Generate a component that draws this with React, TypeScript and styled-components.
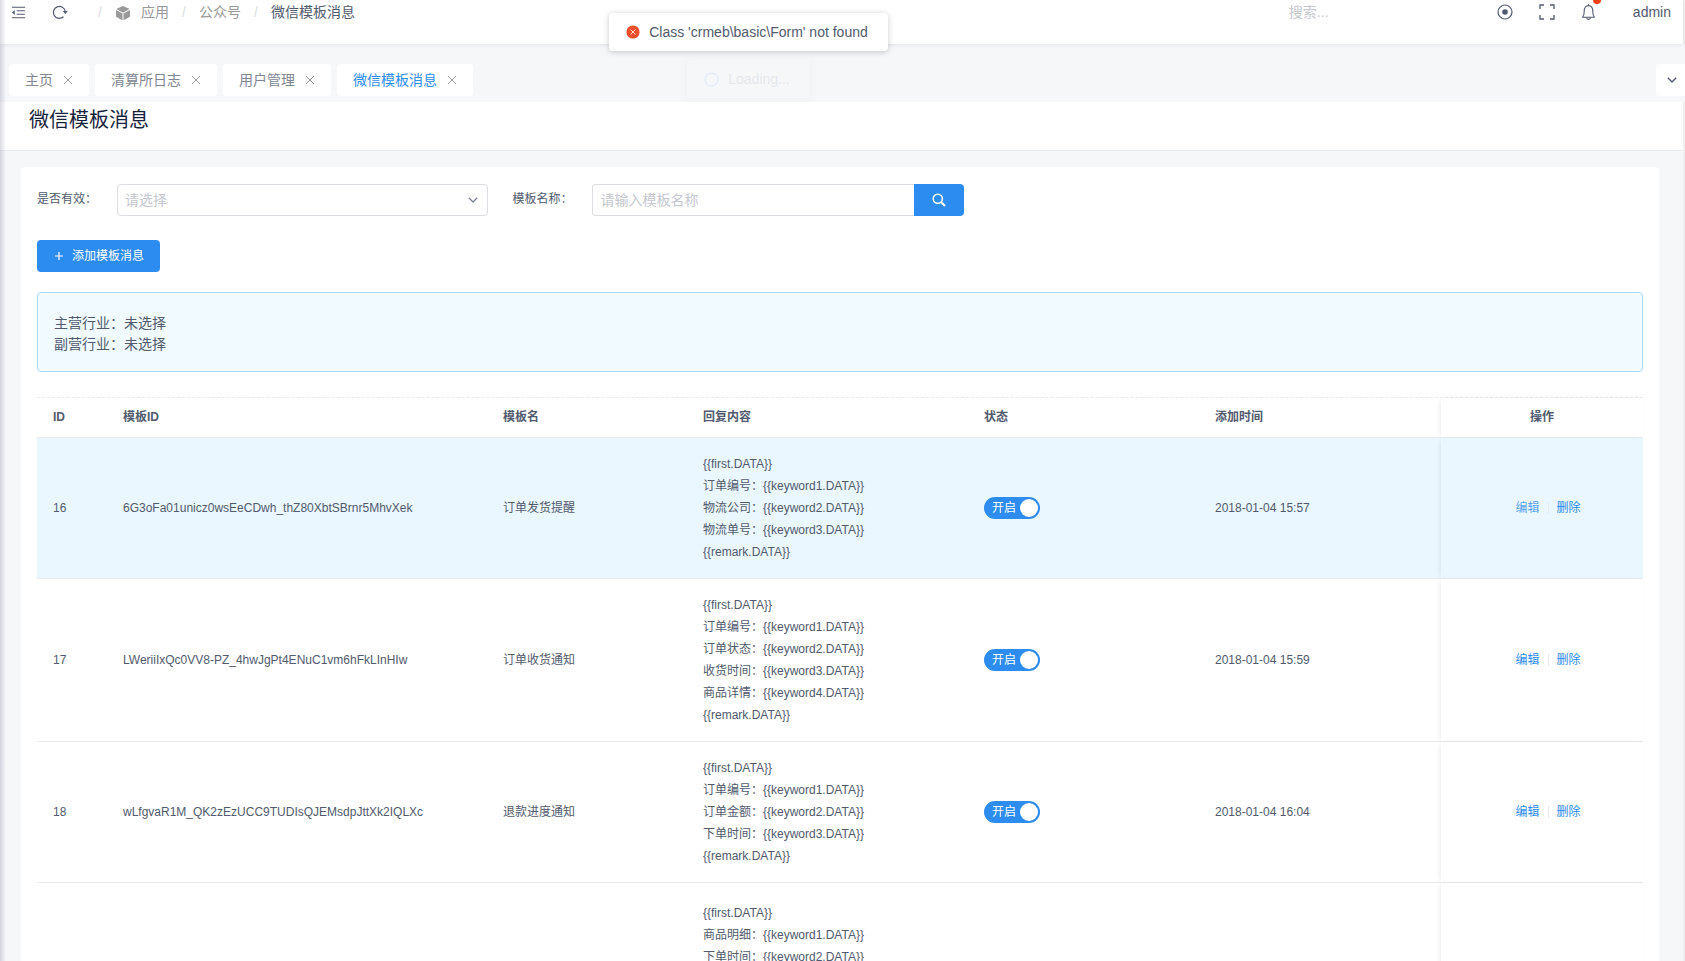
import React from "react";
import styled, { createGlobalStyle } from "styled-components";
import { AiOutlineMenuFold } from "react-icons/ai";
import { IoMdCube } from "react-icons/io";

const GlobalStyle = createGlobalStyle`
  *, *::before, *::after { box-sizing: border-box; }
  body {
    margin: 0;
    background: #f5f7f9;
    color: #515a6e;
    font: 14px/21px "Liberation Sans", "Noto Sans CJK SC", sans-serif;
  }
  button, input, select { font: inherit; color: inherit; margin: 0; }
  button { cursor: pointer; }
  svg { display: block; flex: none; }
`;

const Shell = styled.div`
  position: relative;
  height: 100vh;
  overflow: hidden;
  padding-right: 2px;
  background: linear-gradient(to left, #f0f0f0 2px, #f5f7f9 2px);
  &::before {
    content: "";
    position: absolute;
    z-index: 5;
    inset: 0 auto 0 0;
    width: 6px;
    background: linear-gradient(to right, rgba(100, 100, 140, 0.24), rgba(100, 100, 140, 0));
  }
`;

/* ---------- header ---------- */

const Header = styled.header`
  position: relative;
  display: flex;
  align-items: center;
  height: 44px;
  padding: 0 12px 20px 10px;
  background: #fff;
  box-shadow: 0 1px 4px rgba(0, 21, 41, 0.08);
`;

const IconButton = styled.button`
  position: relative;
  display: flex;
  padding: 0;
  border: 0;
  background: none;
  color: #515a6e;
`;

const HeaderTools = styled.div`
  display: flex;
  align-items: center;
  gap: 25px;
`;

const Breadcrumb = styled.nav`
  display: flex;
  align-items: center;
  margin-left: 17px;
  padding-top: 1px;
`;

const Separator = styled.span`
  width: 30px;
  text-align: center;
  color: #dcdee2;
`;

const Crumb = styled.a`
  display: flex;
  align-items: center;
  gap: 10px;
  color: #999;
  text-decoration: none;
`;

const CurrentCrumb = styled.span`
  color: #515a6e;
`;

const HeaderSearch = styled.input`
  width: 160px;
  height: 24px;
  margin: 0 48px 0 auto;
  padding: 0;
  border: 0;
  background: none;
  outline: none;
  &::placeholder { color: #c5c8ce; opacity: 1; }
`;

const HeaderActions = styled.div`
  display: flex;
  align-items: center;
  gap: 26px;
  margin-right: 37px;
`;

const Dot = styled.i`
  position: absolute;
  top: -8px;
  right: -5px;
  width: 8px;
  height: 8px;
  border-radius: 50%;
  background: #ed4014;
`;

/* ---------- page tabs ---------- */

const TabBar = styled.div`
  display: flex;
  gap: 6px;
  margin-right: -2px;
  padding: 20px 0 6px 9px;
  background: #f5f7f9;
`;

const Tab = styled.div<{ $active?: boolean }>`
  display: flex;
  align-items: center;
  gap: 10px;
  height: 32px;
  padding: 0 16px;
  border-radius: 3px;
  background: #fff;
  a {
    color: ${(p) => (p.$active ? "#2d8cf0" : "#808695")};
    text-decoration: none;
  }
  button { color: #999; }
`;

const TabMenu = styled(IconButton)`
  align-items: center;
  width: 29px;
  height: 32px;
  margin-left: auto;
  padding-left: 11px;
  border-radius: 3px 0 0 3px;
  background: #fff;
`;

/* ---------- page title and card ---------- */

const TitleBar = styled.div`
  height: 49px;
  padding: 2px 29px 0;
  border-bottom: 1px solid #e8eaec;
  background: #fff;
`;

const Title = styled.h1`
  margin: 0;
  color: #17233d;
  font-size: 20px;
  font-weight: 400;
  line-height: 32px;
`;

const Card = styled.main`
  margin: 16px 24px 0 21px;
  padding: 17px 16px 16px;
  border-radius: 4px;
  background: #fff;
`;

const FilterForm = styled.form`
  display: grid;
  grid-template-columns: 7fr 7fr 10fr;
  margin: 0 -12px;
`;

const Field = styled.div`
  display: flex;
  padding: 0 12px;
  label {
    width: 80px;
    flex: none;
    font-size: 12px;
    line-height: 30px;
  }
`;

const SelectBox = styled.div`
  position: relative;
  flex: 1;
  select {
    width: 100%;
    height: 32px;
    padding: 0 24px 0 7px;
    border: 1px solid #dcdee2;
    border-radius: 4px;
    background: #fff;
    color: #c5c8ce;
    appearance: none;
  }
  svg {
    position: absolute;
    top: 11px;
    right: 10px;
    pointer-events: none;
    color: #808695;
  }
`;

const SearchBox = styled.div`
  display: flex;
  flex: 1;
  input {
    flex: 1;
    min-width: 0;
    height: 32px;
    padding: 0 7px;
    border: 1px solid #dcdee2;
    border-right: 0;
    border-radius: 4px 0 0 4px;
    outline: none;
  }
  input::placeholder { color: #c5c8ce; opacity: 1; }
  button {
    display: flex;
    align-items: center;
    justify-content: center;
    width: 50px;
    border: 0;
    border-radius: 0 4px 4px 0;
    background: #2d8cf0;
    color: #fff;
  }
`;

const PrimaryButton = styled.button`
  display: flex;
  align-items: center;
  gap: 8px;
  height: 32px;
  margin-top: 24px;
  padding: 0 16px 0 17px;
  border: 0;
  border-radius: 4px;
  background: #2d8cf0;
  color: #fff;
  font-size: 12px;
`;

const Notice = styled.div`
  margin: 20px 0 25px;
  padding: 20px 16px 16px;
  border: 1px solid #abdcff;
  border-radius: 4px;
  background: #f0faff;
  p { margin: 0; }
`;

/* ---------- table ---------- */

const Table = styled.table`
  width: 100%;
  border-top: 1px dashed #e8eaec;
  border-spacing: 0;
  table-layout: fixed;
  font-size: 12px;
  line-height: 22px;
  text-align: left;
  th {
    height: 40px;
    padding: 0 16px 2px;
    border-bottom: 1px solid #e8eaec;
    font-weight: 700;
  }
  td {
    padding: 15px 16px;
    border-bottom: 1px solid #e8eaec;
  }
  th:last-child, td:last-child {
    box-shadow: -2px 0 6px -2px rgba(0, 0, 0, 0.1);
    text-align: center;
  }
  td:last-child { padding-left: 28px; }
`;

const Row = styled.tr<{ $active?: boolean }>`
  background: ${(p) => (p.$active ? "#ebf7ff" : "#fff")};
`;

const Content = styled.div<{ $roomy?: boolean }>`
  padding: ${(p) => (p.$roomy ? "4px 0" : "0")};
  white-space: pre-line;
`;

const Switch = styled.label`
  position: relative;
  display: flex;
  align-items: center;
  width: 56px;
  height: 22px;
  padding-left: 8px;
  border-radius: 11px;
  background: #2d8cf0;
  color: #fff;
  cursor: pointer;
  input {
    position: absolute;
    inset: 0;
    margin: 0;
    opacity: 0;
  }
  &::after {
    content: "";
    width: 18px;
    height: 18px;
    margin-left: 4px;
    border-radius: 50%;
    background: #fff;
  }
`;

const Actions = styled.div`
  display: flex;
  align-items: center;
  justify-content: center;
  gap: 8px;
`;

const ActionLink = styled.a<{ $hover?: boolean }>`
  color: ${(p) => (p.$hover ? "#57a3f3" : "#2d8cf0")};
  text-decoration: none;
`;

const Divider = styled.span`
  width: 1px;
  height: 12px;
  background: #e8eaec;
`;

/* ---------- floating messages ---------- */

const Messages = styled.div`
  position: absolute;
  z-index: 10;
  top: 13px;
  left: 0;
  right: 188px;
  display: flex;
  flex-direction: column;
  align-items: center;
  gap: 9px;
  pointer-events: none;
`;

const Message = styled.div<{ $fading?: boolean }>`
  display: flex;
  align-items: center;
  gap: 9px;
  height: 38px;
  padding: 0 20px 0 17px;
  border-radius: 4px;
  background: #fff;
  box-shadow: 0 1px 6px rgba(0, 0, 0, 0.2);
  opacity: ${(p) => (p.$fading ? 0.1 : 1)};
`;

/* ---------- icons ---------- */

const RefreshIcon = () => (
  <svg width="16" height="16" viewBox="0 0 16 16">
    <path d="M11.500 12.800A6 6 0 1 1 13.300 7.500" fill="none" stroke="currentColor" strokeWidth="1.200" />
    <path d="M10.800 7h5l-2.500 3z" fill="currentColor" />
  </svg>
);

const BellIcon = () => (
  <svg width="15" height="16" viewBox="0 0 15 16" fill="none" stroke="currentColor" strokeWidth="1.100">
    <path d="M7.500 0v1.500M1.200 13.300h12.600M1.600 13.200C3 11.800 3.200 10.500 3.200 7.500 3.200 3.800 4.800 1.600 7.500 1.600s4.300 2.200 4.300 5.900c0 3 .2 4.300 1.600 5.700" />
    <path d="M5.700 13.800a1.800 1.600 0 0 0 3.600 0" />
  </svg>
);

const CloseIcon = () => (
  <svg width="10" height="10" viewBox="0 0 10 10" fill="none" stroke="currentColor" strokeWidth="1">
    <path d="M1 1l8 8M9 1l-8 8" />
  </svg>
);

const ChevronIcon = () => (
  <svg width="10" height="10" viewBox="0 0 10 10" fill="none" stroke="currentColor" strokeWidth="1.400">
    <path d="M0.800 2.800L5 7l4.200-4.200" />
  </svg>
);

const TargetIcon = () => (
  <svg width="16" height="16" viewBox="0 0 16 16">
    <circle cx="8" cy="8" r="7" fill="none" stroke="currentColor" strokeWidth="1.200" />
    <circle cx="8" cy="8" r="2.800" fill="currentColor" />
  </svg>
);

const FullscreenIcon = () => (
  <svg width="16" height="16" viewBox="0 0 16 16" fill="none" stroke="currentColor" strokeWidth="1.300">
    <path d="M1 5V1h4M11 1h4v4M15 11v4h-4M5 15H1v-4" />
  </svg>
);

const SearchIcon = () => (
  <svg width="14" height="14" viewBox="0 0 14 14" fill="none" stroke="currentColor">
    <circle cx="5.800" cy="5.800" r="4.600" strokeWidth="1.600" />
    <path d="M9 9l4 4" strokeWidth="2.200" />
  </svg>
);

const PlusIcon = () => (
  <svg width="10" height="10" viewBox="0 0 10 10" stroke="currentColor" strokeWidth="1.200">
    <path d="M5 1v8M1 5h8" />
  </svg>
);

const ErrorIcon = () => (
  <svg width="14" height="14" viewBox="0 0 14 14">
    <circle cx="7" cy="7" r="6.600" fill="#ed4f2a" />
    <path d="M4.500 4.500l5 5M9.500 4.500l-5 5" stroke="#ffd8cc" strokeWidth="1" />
  </svg>
);

const SpinnerIcon = () => (
  <svg width="15" height="15" viewBox="0 0 15 15" fill="none">
    <circle cx="7.500" cy="7.500" r="6.500" stroke="#2d8cf0" strokeWidth="1.200" />
  </svg>
);

/* ---------- data ---------- */

const tabs = ["主页", "清算所日志", "用户管理", "微信模板消息"];

const columns = [
  { title: "ID", width: 70 },
  { title: "模板ID", width: 380 },
  { title: "模板名", width: 200 },
  { title: "回复内容", width: 281 },
  { title: "状态", width: 231 },
  { title: "添加时间", width: undefined },
  { title: "操作", width: 202 },
];

const templates = [
  {
    id: 16,
    key: "6G3oFa01unicz0wsEeCDwh_thZ80XbtSBrnr5MhvXek",
    name: "订单发货提醒",
    lines: ["{{first.DATA}}", "订单编号：{{keyword1.DATA}}", "物流公司：{{keyword2.DATA}}", "物流单号：{{keyword3.DATA}}", "{{remark.DATA}}"],
    time: "2018-01-04 15:57",
  },
  {
    id: 17,
    key: "LWeriiIxQc0VV8-PZ_4hwJgPt4ENuC1vm6hFkLInHIw",
    name: "订单收货通知",
    lines: ["{{first.DATA}}", "订单编号：{{keyword1.DATA}}", "订单状态：{{keyword2.DATA}}", "收货时间：{{keyword3.DATA}}", "商品详情：{{keyword4.DATA}}", "{{remark.DATA}}"],
    time: "2018-01-04 15:59",
  },
  {
    id: 18,
    key: "wLfgvaR1M_QK2zEzUCC9TUDIsQJEMsdpJttXk2IQLXc",
    name: "退款进度通知",
    lines: ["{{first.DATA}}", "订单编号：{{keyword1.DATA}}", "订单金额：{{keyword2.DATA}}", "下单时间：{{keyword3.DATA}}", "{{remark.DATA}}"],
    time: "2018-01-04 16:04",
  },
  {
    id: 19,
    key: "",
    name: "",
    lines: ["{{first.DATA}}", "商品明细：{{keyword1.DATA}}", "下单时间：{{keyword2.DATA}}", "{{keyword3.DATA}}", "{{keyword4.DATA}}", "{{keyword5.DATA}}", "{{remark.DATA}}"],
    time: "",
    roomy: true,
  },
];

export default function App() {
  const [activeId, setActiveId] = React.useState(16);

  return (
    <Shell>
      <GlobalStyle />
      <Header>
        <HeaderTools>
          <IconButton aria-label="收起菜单"><AiOutlineMenuFold size={17} /></IconButton>
          <IconButton aria-label="刷新"><RefreshIcon /></IconButton>
        </HeaderTools>
        <Breadcrumb>
          <Separator>/</Separator>
          <Crumb href="#app"><IoMdCube size={16} />应用</Crumb>
          <Separator>/</Separator>
          <Crumb href="#wechat">公众号</Crumb>
          <Separator>/</Separator>
          <CurrentCrumb>微信模板消息</CurrentCrumb>
        </Breadcrumb>
        <HeaderSearch aria-label="搜索" placeholder="搜索..." />
        <HeaderActions>
          <IconButton aria-label="日志"><TargetIcon /></IconButton>
          <IconButton aria-label="全屏"><FullscreenIcon /></IconButton>
          <IconButton aria-label="通知"><BellIcon /><Dot /></IconButton>
        </HeaderActions>
        <IconButton>admin</IconButton>
      </Header>

      <TabBar>
        {tabs.map((name, i) => (
          <Tab key={name} $active={i === tabs.length - 1}>
            <a href="#tab">{name}</a>
            <IconButton aria-label={`关闭${name}`}><CloseIcon /></IconButton>
          </Tab>
        ))}
        <TabMenu aria-label="更多标签"><ChevronIcon /></TabMenu>
      </TabBar>

      <TitleBar><Title>微信模板消息</Title></TitleBar>

      <Card>
        <FilterForm onSubmit={(e) => e.preventDefault()}>
          <Field>
            <label htmlFor="valid">是否有效：</label>
            <SelectBox>
              <select id="valid" defaultValue="">
                <option value="">请选择</option>
                <option value="1">开启</option>
                <option value="0">关闭</option>
              </select>
              <ChevronIcon />
            </SelectBox>
          </Field>
          <Field>
            <label htmlFor="name">模板名称：</label>
            <SearchBox>
              <input id="name" placeholder="请输入模板名称" />
              <button aria-label="查询"><SearchIcon /></button>
            </SearchBox>
          </Field>
        </FilterForm>

        <PrimaryButton><PlusIcon />添加模板消息</PrimaryButton>

        <Notice>
          <p>主营行业：未选择</p>
          <p>副营行业：未选择</p>
        </Notice>

        <Table>
          <colgroup>
            {columns.map((c) => <col key={c.title} width={c.width} />)}
          </colgroup>
          <thead>
            <tr>{columns.map((c) => <th key={c.title}>{c.title}</th>)}</tr>
          </thead>
          <tbody>
            {templates.map((t) => (
              <Row key={t.id} $active={t.id === activeId} onMouseEnter={() => setActiveId(t.id)}>
                <td>{t.id}</td>
                <td>{t.key}</td>
                <td>{t.name}</td>
                <td><Content $roomy={t.roomy}>{t.lines.join("\n")}</Content></td>
                <td>
                  <Switch><input type="checkbox" defaultChecked />开启</Switch>
                </td>
                <td>{t.time}</td>
                <td>
                  <Actions>
                    <ActionLink href="#edit" $hover={t.id === activeId}>编辑</ActionLink>
                    <Divider />
                    <ActionLink href="#delete">删除</ActionLink>
                  </Actions>
                </td>
              </Row>
            ))}
          </tbody>
        </Table>
      </Card>

      <Messages>
        <Message role="alert"><ErrorIcon />Class 'crmeb\basic\Form' not found</Message>
        <Message $fading><SpinnerIcon />Loading...</Message>
      </Messages>
    </Shell>
  );
}
